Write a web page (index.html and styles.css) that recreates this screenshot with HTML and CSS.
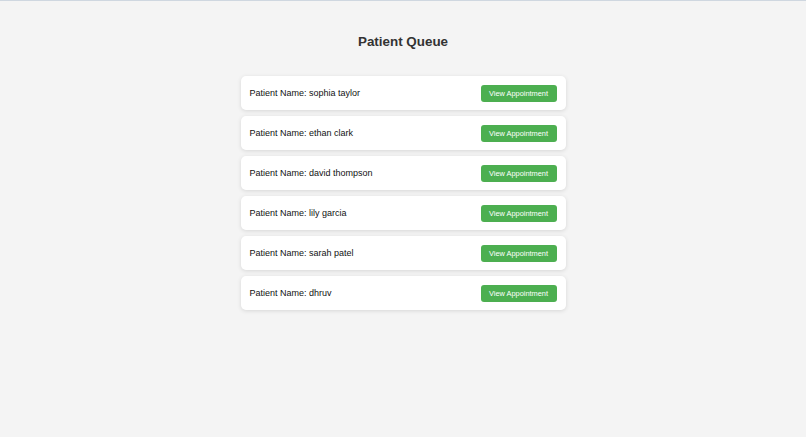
FILE: index.html
```html
<!DOCTYPE html>
<html lang="en">
<head>
<meta charset="utf-8">
<title>Patient Queue</title>
<link rel="stylesheet" href="styles.css">
</head>
<body>
<div class="page">
  <h1 class="title">Patient Queue</h1>
  <ul class="queue">
    <li class="card"><span class="name">Patient Name: sophia taylor</span><button class="btn">View Appointment</button></li>
    <li class="card"><span class="name">Patient Name: ethan clark</span><button class="btn">View Appointment</button></li>
    <li class="card"><span class="name">Patient Name: david thompson</span><button class="btn">View Appointment</button></li>
    <li class="card"><span class="name">Patient Name: lily garcia</span><button class="btn">View Appointment</button></li>
    <li class="card"><span class="name">Patient Name: sarah patel</span><button class="btn">View Appointment</button></li>
    <li class="card"><span class="name">Patient Name: dhruv</span><button class="btn">View Appointment</button></li>
  </ul>
</div>
</body>
</html>
```
FILE: styles.css
```css
html, body {
  margin: 0;
  padding: 0;
  height: 100%;
}
body {
  background: #f4f4f4;
  border-top: 1px solid #cfd7e0;
  box-sizing: border-box;
  font-family: "Liberation Sans", Arial, sans-serif;
  color: #111;
}
.page {
  padding-top: 33px;
  display: flex;
  flex-direction: column;
  align-items: center;
}
.title {
  margin: 0;
  font-size: 13.4px;
  line-height: 16px;
  font-weight: bold;
  color: #333;
}
.queue {
  list-style: none;
  margin: 26px 0 0;
  padding: 0;
  width: 325px;
  display: flex;
  flex-direction: column;
  gap: 6px;
}
.card {
  background: #fff;
  border-radius: 5px;
  box-shadow: 0 1px 4px rgba(0, 0, 0, 0.12);
  height: 34px;
  box-sizing: border-box;
  padding: 0 9px;
  display: flex;
  align-items: center;
  justify-content: space-between;
}
.name {
  font-size: 9px;
  color: #111;
}
.btn {
  background: #4caf50;
  color: #fff;
  border: none;
  border-radius: 3px;
  font-family: "Liberation Sans", Arial, sans-serif;
  font-size: 7.4px;
  width: 76px;
  height: 17px;
  padding: 0;
  cursor: pointer;
}
```
